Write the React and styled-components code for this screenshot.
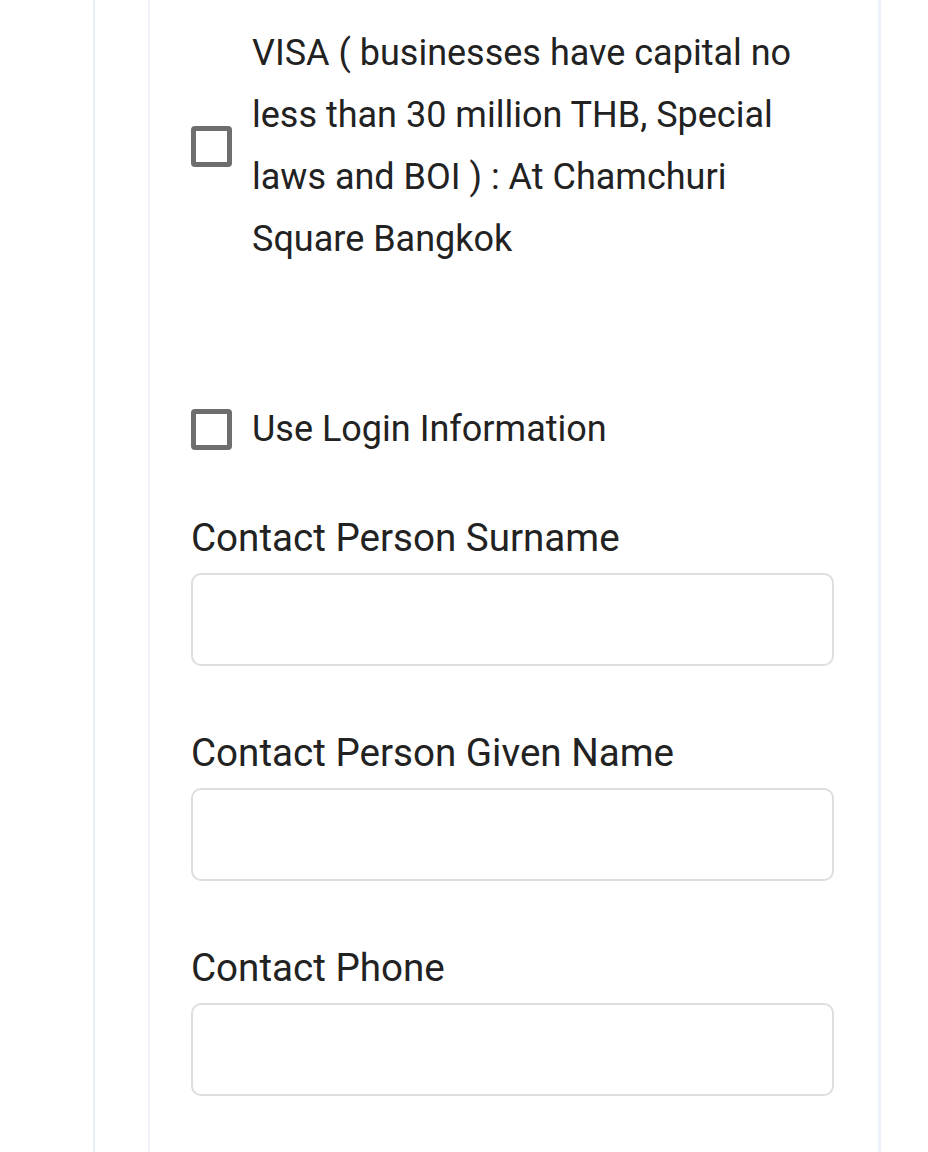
import React from 'react';
import styled, { createGlobalStyle } from 'styled-components';

const GlobalStyle = createGlobalStyle`
  html, body {
    margin: 0;
    padding: 0;
    background: #ffffff;
    overflow: hidden;
  }
  body {
    font-family: Roboto, "Noto Sans", Arial, sans-serif;
    color: #222222;
  }
`;

// outer page column with a faint left rule
const Page = styled.div`
  min-height: 1152px;
  margin-left: 93px;
  padding-left: 53px;
  border-left: 2px solid #eaeff7;
`;

const Card = styled.div`
  width: 733px;
  min-height: 1152px;
  box-sizing: border-box;
  padding: 22px 44px 0 41px;
  border-left: 2px solid #eef2f8;
  border-right: 3px solid #edf1f8;
  background: #ffffff;
`;

const CheckRow = styled.label`
  display: flex;
  align-items: center;
  gap: 20px;
  margin-bottom: ${(p) => p.$gap || 0}px;
  cursor: pointer;
`;

const Box = styled.input.attrs({ type: 'checkbox' })`
  appearance: none;
  -webkit-appearance: none;
  flex: 0 0 auto;
  width: 41px;
  height: 41px;
  margin: 0;
  box-sizing: border-box;
  border: 5px solid #6e6e6e;
  border-radius: 4px;
  background: #fff;
`;

const CheckText = styled.span`
  font-size: 36px;
  line-height: 62px;
  color: #222;
`;

const Field = styled.div`
  margin-bottom: ${(p) => p.$gap || 0}px;
`;

const Label = styled.div`
  font-size: 38.6px;
  line-height: 62px;
  color: #222;
  margin-bottom: 4px;
`;

const TextInput = styled.input`
  display: block;
  width: 100%;
  height: 93px;
  box-sizing: border-box;
  border: 2px solid #dedede;
  border-radius: 10px;
  background: #fff;
  font: inherit;
  font-size: 34px;
  padding: 0 20px;
  outline: none;
`;

const fields = ['Contact Person Surname', 'Contact Person Given Name', 'Contact Phone'];

export default function App() {
  return (
    <>
      <GlobalStyle />
      <Page>
        <Card>
          <CheckRow $gap={128}>
            <Box />
            <CheckText>
              VISA ( businesses have capital no less than 30 million THB, Special laws and BOI ) : At Chamchuri Square Bangkok
            </CheckText>
          </CheckRow>
          <CheckRow $gap={47}>
            <Box />
            <CheckText>Use Login Information</CheckText>
          </CheckRow>
          {fields.map((f) => (
            <Field key={f} $gap={56}>
              <Label>{f}</Label>
              <TextInput type="text" />
            </Field>
          ))}
        </Card>
      </Page>
    </>
  );
}
